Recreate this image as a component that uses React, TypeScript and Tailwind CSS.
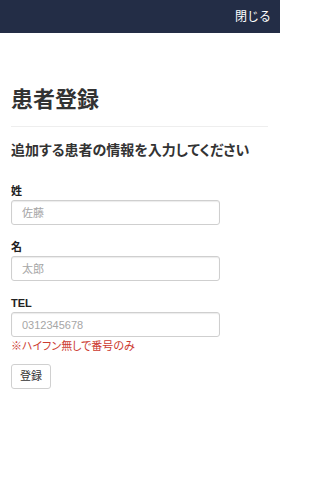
import React from "react";

const jp = { fontFamily: '"Liberation Sans", "Noto Sans CJK JP", sans-serif' };

function Field({ label, placeholder }: { label: string; placeholder: string }) {
  return (
    <div className="flex flex-col">
      <label className="text-[11px] leading-[14px] font-bold text-[#222]">{label}</label>
      <input
        className="mt-[2px] h-[25px] w-[209px] rounded-[3px] border border-[#cfcfcf] bg-white px-[10px] text-[11px] text-[#333] shadow-[inset_0_1px_1px_rgba(0,0,0,0.08)] outline-none placeholder:text-[#a6a6a6]"
        placeholder={placeholder}
        style={jp}
      />
    </div>
  );
}

export default function App() {
  return (
    <div className="min-h-[498px] w-[280px] bg-white" style={jp}>
      <header className="flex h-[33px] items-center justify-end bg-[#232d46] pr-[9px]">
        <span className="text-[12px] text-white">閉じる</span>
      </header>
      <main className="pl-[11px] pr-[12px]">
        <h1 className="mt-[51px] text-[22px] font-bold leading-[32px] text-[#333]">患者登録</h1>
        <hr className="mt-[10px] border-t border-[#eeeeee]" />
        <h2
          className="mt-[13px] text-[14px] font-bold leading-[20px] text-[#333]"
          style={{ fontFeatureSettings: '"palt"' }}
        >
          追加する患者の情報を入力してください
        </h2>
        <div className="mt-[24px] flex flex-col gap-[15px]">
          <Field label="姓" placeholder="佐藤" />
          <Field label="名" placeholder="太郎" />
          <div className="flex flex-col">
            <Field label="TEL" placeholder="0312345678" />
            <p
              className="mt-[2px] text-[11px] leading-[14px] text-[#cc3a30]"
              style={{ fontFeatureSettings: '"palt"' }}
            >
              ※ハイフン無しで番号のみ
            </p>
          </div>
        </div>
        <button className="mt-[11px] h-[25px] w-[40px] rounded-[3px] border border-[#d0d0d0] bg-white text-[11px] text-[#333]">
          登録
        </button>
      </main>
    </div>
  );
}
